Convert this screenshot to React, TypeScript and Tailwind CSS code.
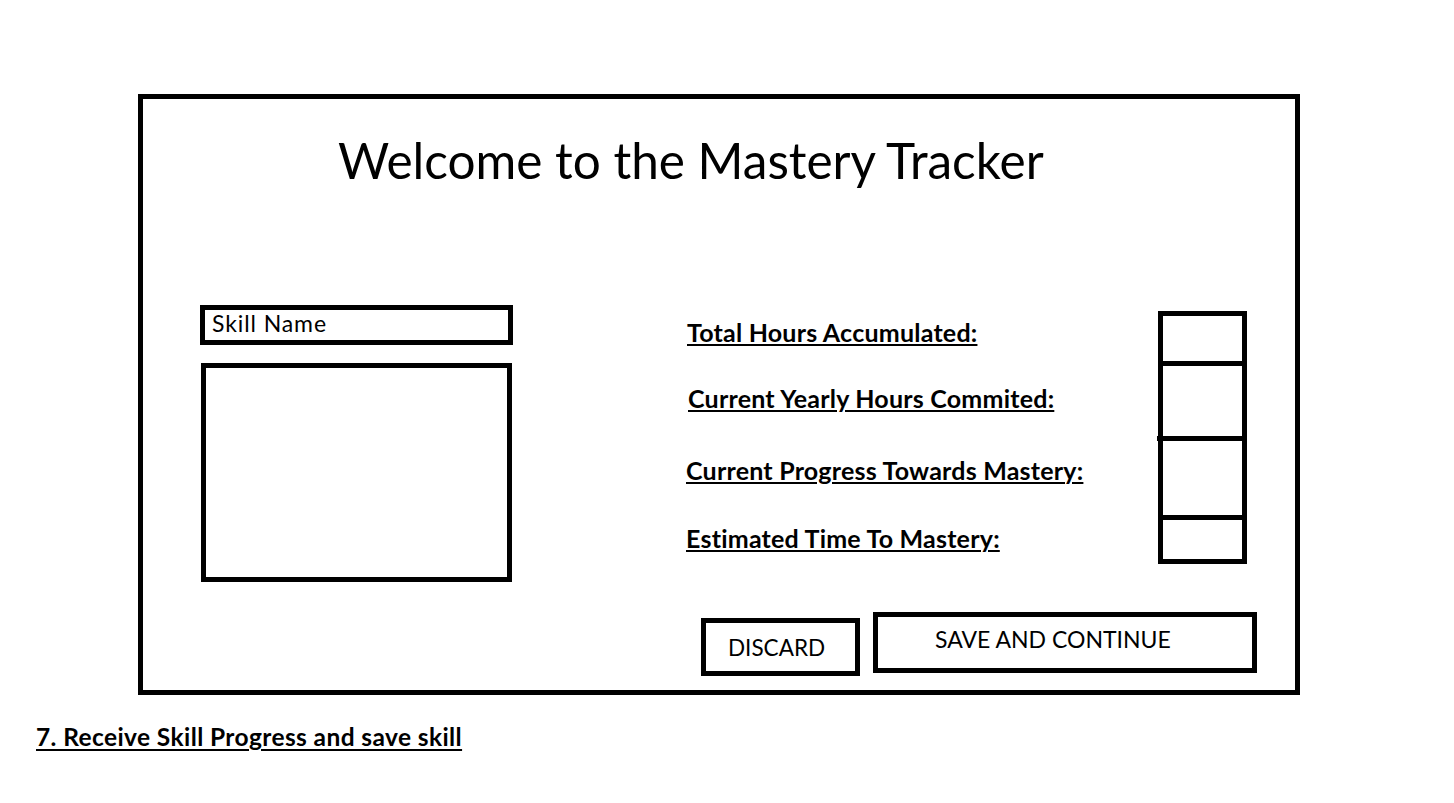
const labels = [
  { text: "Total Hours Accumulated:", mt: "mt-[13px]", ml: "ml-[1px]" },
  { text: "Current Yearly Hours Commited:", mt: "mt-[38px]", ml: "ml-[2px]" },
  { text: "Current Progress Towards Mastery:", mt: "mt-[44px]", ml: "ml-0" },
  { text: "Estimated Time To Mastery:", mt: "mt-[40px]", ml: "ml-0" },
];

const StatCells = () => (
  <div className="mt-[6px] w-[89px] border-[5px] border-black flex flex-col">
    <div className="h-[45px]" />
    <div className="h-[5px] bg-black" />
    <div className="h-[70px]" />
    <div className="h-[5px] bg-black -ml-[6px]" />
    <div className="h-[74px]" />
    <div className="h-[5px] bg-black" />
    <div className="h-[39px]" />
  </div>
);

export default function App() {
  return (
    <div className="w-full h-[803px] bg-white text-black font-['Lato',sans-serif] pt-[94px]">
      {/* wireframe frame */}
      <div className="ml-[138px] w-[1162px] h-[601px] border-[5px] border-black flex flex-col">
        <h1 className="pl-[195px] pt-[33px] text-[49.5px] leading-[56px] font-normal">
          Welcome to the Mastery Tracker
        </h1>

        <div className="flex items-start mt-[117px]">
          {/* skill input + preview */}
          <div className="ml-[57px] flex flex-col">
            <div className="w-[313px] h-[40px] border-[5px] border-black pl-[7px] pt-[1px] text-[23px] leading-[24px] tracking-[0.9px]">
              Skill Name
            </div>
            <div className="mt-[18px] ml-[1px] w-[311px] h-[219px] border-[5px] border-black" />
          </div>

          {/* stats labels */}
          <div className="ml-[173px] w-[472px] flex flex-col items-start">
            {labels.map((l) => (
              <p
                key={l.text}
                className={`${l.mt} ${l.ml} text-[25px] leading-[28px] tracking-[0.22px] font-bold underline decoration-[2px] underline-offset-[2px]`}
              >
                {l.text}
              </p>
            ))}
          </div>

          <StatCells />
        </div>

        {/* actions */}
        <div className="flex items-start mt-[30px]">
          <button className="ml-[558px] mt-[6px] w-[159px] h-[58px] border-[5px] border-black pl-[22px] pt-[12px] text-left text-[22.5px] leading-[26px] flex items-start">
            DISCARD
          </button>
          <button className="ml-[13px] w-[384px] h-[61px] border-[5px] border-black pl-[57px] pt-[9px] text-left text-[23px] leading-[26px] flex items-start">
            SAVE AND CONTINUE
          </button>
        </div>
      </div>

      <p className="mt-[29px] ml-[36px] text-[24.5px] leading-[26px] tracking-[0.4px] font-bold underline decoration-[2px] underline-offset-[3px]">
        7. Receive Skill Progress and save skill
      </p>
    </div>
  );
}
